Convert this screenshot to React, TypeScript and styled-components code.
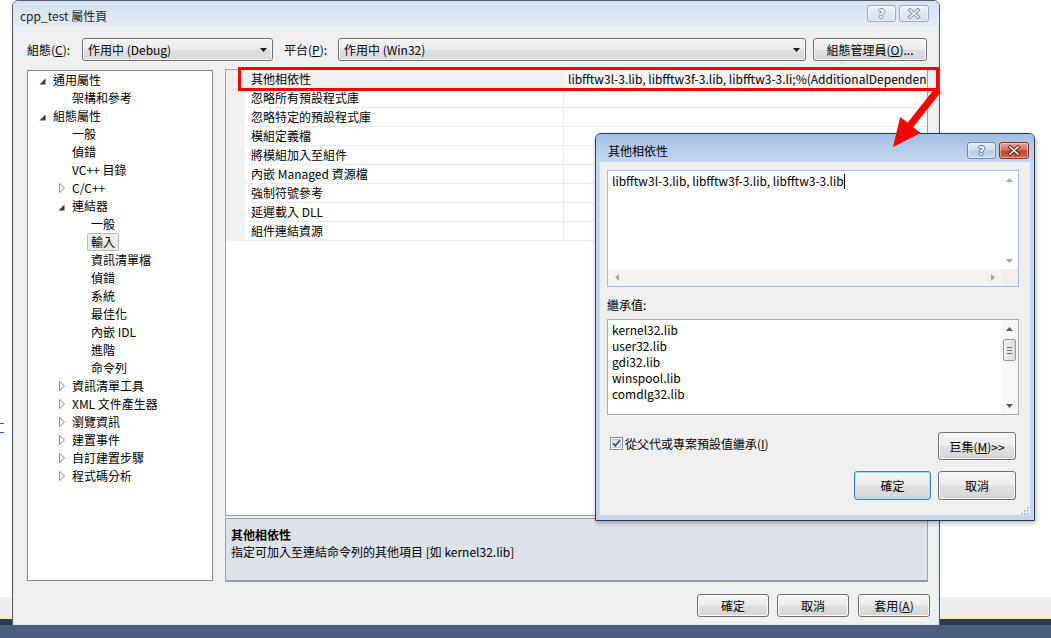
import React from "react";
import styled, { createGlobalStyle } from "styled-components";

const FONT = `"Noto Sans CJK TC", "Noto Sans", sans-serif`;

const GlobalStyle = createGlobalStyle`
  html, body { margin: 0; padding: 0; background: #fff; }
  body { font-family: ${FONT}; font-size: 12px; color: #000; }
  * { box-sizing: border-box; }
  u { text-decoration: underline; text-underline-offset: 1px; }
`;

/* ---------- desktop ---------- */
const Desktop = styled.div`
  position: relative;
  width: 1051px;
  height: 638px;
  overflow: hidden;
  display: flex;
  flex-direction: column;
  background: #fff;
`;
const DeskArea = styled.div`
  flex: 1;
`;
const Strip = styled.div<{ $h: number; $c: string }>`
  flex: none;
  height: ${(p) => p.$h}px;
  background: ${(p) => p.$c};
`;
const EdgeDash = styled.div<{ $top: number }>`
  position: absolute;
  left: 0;
  top: ${(p) => p.$top}px;
  width: 4px;
  height: 1px;
  background: #2b4fd0;
`;

/* ---------- main window ---------- */
const Window = styled.div`
  position: absolute;
  left: 12px;
  top: 0;
  width: 928px;
  height: 626px;
  border: 1px solid #565d68;
  border-radius: 6px 6px 0 0;
  background: #f0f0f0;
  display: flex;
  flex-direction: column;
  box-shadow: inset 1px 0 0 #d9e4f2, inset -1px 0 0 #d9e4f2, inset 0 -1px 0 #d9e4f2;
`;
const TitleBar = styled.div`
  flex: none;
  height: 25px;
  display: flex;
  align-items: flex-start;
  padding: 0 10px 0 7px;
  border-radius: 5px 5px 0 0;
  background: linear-gradient(to bottom, #d3e0f0 0%, #dde7f4 60%, #e2eaf5 100%);
`;
const TitleText = styled.div`
  margin-top: 6px;
  line-height: 17px;
  font-size: 12px;
  color: #222;
  flex: 1;
`;
const CaptionGroup = styled.div`
  display: flex;
  gap: 3px;
  margin-top: 4px;
`;
const CaptionBtn = styled.div<{ $w: number; $kind: "plain" | "active" | "close" }>`
  width: ${(p) => p.$w}px;
  height: 17px;
  border-radius: 3px;
  display: flex;
  align-items: center;
  justify-content: center;
  border: 1px solid ${(p) => (p.$kind === "close" ? "#7d3326" : p.$kind === "active" ? "#6f87a8" : "#98a9c0")};
  background: ${(p) =>
    p.$kind === "close"
      ? "linear-gradient(to bottom, #e9a99c 0%, #d4705c 45%, #c2412a 55%, #d76a52 100%)"
      : p.$kind === "active"
      ? "linear-gradient(to bottom, #e6eef8 0%, #cddcef 45%, #b7cbe6 55%, #c9d9ee 100%)"
      : "linear-gradient(to bottom, #eef3f9 0%, #dfe7f2 50%, #d5e0ee 100%)"};
  box-shadow: inset 0 0 0 1px rgba(255, 255, 255, 0.45);
`;
const HelpGlyph = styled.span<{ $c: string }>`
  font-family: "DejaVu Sans", sans-serif;
  font-weight: bold;
  font-size: 12px;
  line-height: 12px;
  color: #f7f9fc;
  text-shadow: 1px 0 ${(p) => p.$c}, -1px 0 ${(p) => p.$c}, 0 1px ${(p) => p.$c}, 0 -1px ${(p) => p.$c};
`;

const CloseGlyph = ({ outer, inner }: { outer: string; inner: string }) => (
  <svg width="14" height="11" viewBox="0 0 14 11">
    <g strokeLinecap="square">
      <line x1="3" y1="2" x2="11" y2="9" stroke={outer} strokeWidth="3.6" />
      <line x1="11" y1="2" x2="3" y2="9" stroke={outer} strokeWidth="3.6" />
      <line x1="3" y1="2" x2="11" y2="9" stroke={inner} strokeWidth="1.6" />
      <line x1="11" y1="2" x2="3" y2="9" stroke={inner} strokeWidth="1.6" />
    </g>
  </svg>
);

const Body = styled.div`
  flex: 1;
  display: flex;
  flex-direction: column;
  padding: 12px 11px 8px 14px;
`;

const ConfigRow = styled.div`
  display: flex;
  align-items: center;
  height: 23px;
`;
const FieldLabel = styled.div<{ $w: number; $pl?: number }>`
  width: ${(p) => p.$w}px;
  padding-left: ${(p) => p.$pl ?? 0}px;
  flex: none;
  line-height: 17px;
  white-space: nowrap;
`;
const Combo = styled.div<{ $w: number }>`
  width: ${(p) => p.$w}px;
  height: 23px;
  flex: none;
  display: flex;
  align-items: center;
  justify-content: space-between;
  padding: 0 5px 0 5px;
  border: 1px solid #707070;
  border-radius: 3px;
  background: linear-gradient(to bottom, #f4f4f4 0%, #ececec 48%, #e0e0e0 52%, #d9d9d9 100%);
  box-shadow: inset 0 0 0 1px #fafafa;
  line-height: 17px;
`;
const DropArrow = () => (
  <svg width="7" height="4" viewBox="0 0 7 4">
    <polygon points="0,0 7,0 3.5,4" fill="#1a1a1a" />
  </svg>
);

const Btn = styled.button<{ $w: number; $h: number; $focus?: boolean; $ml?: number }>`
  width: ${(p) => p.$w}px;
  height: ${(p) => p.$h}px;
  margin-left: ${(p) => p.$ml ?? 0}px;
  flex: none;
  padding: 0;
  display: flex;
  align-items: center;
  justify-content: center;
  font-family: ${FONT};
  font-size: 12px;
  line-height: 17px;
  color: #000;
  border: 1px solid ${(p) => (p.$focus ? "#3c7fb1" : "#707070")};
  border-radius: 3px;
  background: linear-gradient(to bottom, #f5f5f5 0%, #ededed 48%, #e0e0e0 52%, #d5d5d5 100%);
  box-shadow: inset 0 0 0 1px ${(p) => (p.$focus ? "#a9dcf6" : "#fbfbfb")};
  white-space: nowrap;
`;

const ContentRow = styled.div`
  display: flex;
  gap: 12px;
  margin-top: 8px;
  height: 513px;
`;

/* ---------- tree ---------- */
const Tree = styled.div`
  width: 186px;
  height: 511px;
  margin-top: 1px;
  flex: none;
  border: 1px solid #828790;
  background: #fff;
`;
const TreeRow = styled.div<{ $level: number }>`
  height: 18px;
  display: flex;
  align-items: center;
  padding-left: ${(p) => 6 + p.$level * 19}px;
`;
const Toggle = styled.div`
  width: 19px;
  height: 18px;
  flex: none;
  display: flex;
  align-items: center;
  padding-left: 5px;
`;
const TreeLabel = styled.div<{ $sel?: boolean }>`
  margin-left: -4px;
  padding: 0 3px;
  height: 18px;
  line-height: 16px;
  white-space: nowrap;
  border: 1px solid ${(p) => (p.$sel ? "#b9b9b9" : "transparent")};
  border-radius: 2px;
  background: ${(p) => (p.$sel ? "#ebebeb" : "transparent")};
`;
const OpenTri = () => (
  <svg width="7" height="7" viewBox="0 0 7 7" style={{ marginTop: 2 }}>
    <polygon points="6.5,0.5 6.5,6.5 0.5,6.5" fill="#3b3b3b" />
  </svg>
);
const ClosedTri = () => (
  <svg width="7" height="10" viewBox="0 0 7 10" style={{ marginLeft: 1 }}>
    <polygon points="0.5,0.5 5.5,5 0.5,9.5" fill="#fff" stroke="#8c8c8c" strokeWidth="1" />
  </svg>
);

/* ---------- property grid ---------- */
const RightCol = styled.div`
  flex: 1;
  display: flex;
  flex-direction: column;
  gap: 2px;
`;
const Grid = styled.div`
  height: 447px;
  border: 1px solid #a0a0a0;
  background: #fff;
  overflow: hidden;
`;
const PropRow = styled.div`
  display: grid;
  grid-template-columns: 19px 319px 1fr;
  height: 19px;
`;
const Gutter = styled.div`
  background: #f0f0f0;
`;
const NameCell = styled.div<{ $active?: boolean }>`
  padding-left: 6px;
  line-height: 18px;
  border-bottom: 1px solid #ececec;
  border-right: 1px solid #ececec;
  background: ${(p) => (p.$active ? "#f0f0f0" : "#fff")};
  white-space: nowrap;
  overflow: hidden;
`;
const ValueCell = styled.div<{ $active?: boolean }>`
  padding-left: 4px;
  line-height: 18px;
  border-bottom: 1px solid #ececec;
  background: ${(p) => (p.$active ? "#f4f4f4" : "#fff")};
  white-space: nowrap;
  overflow: hidden;
`;
const Description = styled.div`
  height: 64px;
  border: 1px solid #a0a0a0;
  border-bottom: 2px solid #9c9c9c;
  background: #dde1e8;
  padding: 7px 5px;
`;
const DescLine = styled.div<{ $bold?: boolean }>`
  line-height: 17px;
  font-weight: ${(p) => (p.$bold ? "bold" : "normal")};
  white-space: nowrap;
`;
const ButtonRow = styled.div`
  display: flex;
  justify-content: flex-end;
  gap: 8px;
  margin-top: 12px;
  margin-right: -2px;
  height: 23px;
`;

/* ---------- dialog ---------- */
const Dialog = styled.div`
  position: absolute;
  left: 595px;
  top: 133px;
  width: 440px;
  height: 388px;
  border: 1px solid #2f3946;
  border-radius: 6px 6px 0 0;
  background: #c2d6ef;
  display: flex;
  flex-direction: column;
  box-shadow: 1px 2px 5px rgba(0, 0, 0, 0.3);
`;
const DlgTitleBar = styled.div`
  flex: none;
  height: 28px;
  display: flex;
  align-items: flex-start;
  padding: 0 5px 0 12px;
  border-radius: 5px 5px 0 0;
  background: linear-gradient(to bottom, #a0bde3 0%, #b3cbea 45%, #c2d6ef 100%);
`;
const DlgTitle = styled.div`
  flex: 1;
  margin-top: 8px;
  line-height: 17px;
`;
const DlgCaptions = styled(CaptionGroup)`
  margin-top: 8px;
`;
const DlgInterior = styled.div`
  position: relative;
  flex: 1;
  margin: 0 4px 5px 4px;
  background: #f0f0f0;
  display: flex;
  flex-direction: column;
  padding: 8px 11px 0 7px;
`;
const EditBox = styled.div`
  height: 117px;
  border: 1px solid #a7bcd8;
  background: #fff;
  display: grid;
  grid-template-columns: 1fr 17px;
  grid-template-rows: 1fr 17px;
`;
const EditText = styled.div`
  padding: 2px 4px;
  line-height: 16px;
  white-space: nowrap;
`;
const Caret = styled.span`
  display: inline-block;
  width: 1px;
  height: 15px;
  background: #000;
  vertical-align: -3px;
`;
const VScroll = styled.div<{ $bg: string }>`
  display: flex;
  flex-direction: column;
  align-items: center;
  background: ${(p) => p.$bg};
`;
const HScroll = styled.div`
  display: flex;
  align-items: center;
  justify-content: space-between;
  background: #f3f3f3;
`;
const Corner = styled.div`
  background: #f0f0f0;
`;
const ArrowBox = styled.div`
  width: 17px;
  height: 17px;
  flex: none;
  display: flex;
  align-items: center;
  justify-content: center;
`;
const Spacer = styled.div`
  flex: 1;
`;
const ScrollArrow = ({ dir, color }: { dir: "up" | "down" | "left" | "right"; color: string }) => {
  const pts =
    dir === "up"
      ? "0,4 7,4 3.5,0"
      : dir === "down"
      ? "0,0 7,0 3.5,4"
      : dir === "left"
      ? "4,0 4,7 0,3.5"
      : "0,0 0,7 4,3.5";
  const horiz = dir === "left" || dir === "right";
  return (
    <svg width={horiz ? 4 : 7} height={horiz ? 7 : 4} viewBox={horiz ? "0 0 4 7" : "0 0 7 4"}>
      <polygon points={pts} fill={color} />
    </svg>
  );
};

const FieldCaption = styled.div`
  margin-top: 9px;
  height: 18px;
  line-height: 18px;
`;
const ListBox = styled.div`
  margin-top: 5px;
  height: 96px;
  border: 1px solid #abadb3;
  background: #fff;
  display: grid;
  grid-template-columns: 1fr 17px;
`;
const ListItems = styled.div`
  padding: 2px 4px;
`;
const ListItem = styled.div`
  line-height: 16px;
`;
const Thumb = styled.div`
  width: 13px;
  height: 22px;
  margin-top: 2px;
  border: 1px solid #979797;
  border-radius: 2px;
  background: linear-gradient(to right, #f4f4f4, #e4e4e4 60%, #d9d9d9);
  display: flex;
  flex-direction: column;
  align-items: center;
  justify-content: center;
  gap: 2px;
`;
const GripLine = styled.div`
  width: 5px;
  height: 1px;
  background: #6d6d6d;
`;
const CheckRow = styled.div`
  margin-top: 17px;
  margin-right: 3px;
  height: 28px;
  display: flex;
  justify-content: space-between;
  align-items: flex-start;
`;
const CheckGroup = styled.div`
  display: flex;
  align-items: center;
  gap: 2px;
  margin-top: 3px;
  margin-left: 3px;
`;
const CheckLabel = styled.span`
  line-height: 17px;
`;
const CheckBox = () => (
  <svg width="13" height="13" viewBox="0 0 13 13">
    <defs>
      <linearGradient id="cbg" x1="0" y1="0" x2="1" y2="1">
        <stop offset="0" stopColor="#dcdcdc" />
        <stop offset="1" stopColor="#fbfbfb" />
      </linearGradient>
    </defs>
    <rect x="0.5" y="0.5" width="12" height="12" fill="#fff" stroke="#8e8f8f" />
    <rect x="2.5" y="2.5" width="8" height="8" fill="url(#cbg)" stroke="#c9c9c9" />
    <path d="M3.3 6.4 L5.4 8.8 L9.8 3.2" fill="none" stroke="#3c4f92" strokeWidth="1.8" />
  </svg>
);
const OkRow = styled.div`
  margin-top: 11px;
  margin-right: 3px;
  display: flex;
  justify-content: flex-end;
  gap: 7px;
`;
const ResizeGrip = styled.div`
  position: absolute;
  right: 1px;
  bottom: 1px;
  width: 11px;
  height: 11px;
`;

/* ---------- annotation overlays ---------- */
const RedBox = styled.div`
  position: absolute;
  left: 238px;
  top: 67px;
  width: 701px;
  height: 24px;
  border: 3px solid #ff0000;
`;
const ArrowSvg = styled.svg`
  position: absolute;
  left: 885px;
  top: 84px;
`;

type TreeNode = { label: string; level: number; toggle?: "open" | "closed"; selected?: boolean };
const treeItems: TreeNode[] = [
  { label: "通用屬性", level: 0, toggle: "open" },
  { label: "架構和參考", level: 1 },
  { label: "組態屬性", level: 0, toggle: "open" },
  { label: "一般", level: 1 },
  { label: "偵錯", level: 1 },
  { label: "VC++ 目錄", level: 1 },
  { label: "C/C++", level: 1, toggle: "closed" },
  { label: "連結器", level: 1, toggle: "open" },
  { label: "一般", level: 2 },
  { label: "輸入", level: 2, selected: true },
  { label: "資訊清單檔", level: 2 },
  { label: "偵錯", level: 2 },
  { label: "系統", level: 2 },
  { label: "最佳化", level: 2 },
  { label: "內嵌 IDL", level: 2 },
  { label: "進階", level: 2 },
  { label: "命令列", level: 2 },
  { label: "資訊清單工具", level: 1, toggle: "closed" },
  { label: "XML 文件產生器", level: 1, toggle: "closed" },
  { label: "瀏覽資訊", level: 1, toggle: "closed" },
  { label: "建置事件", level: 1, toggle: "closed" },
  { label: "自訂建置步驟", level: 1, toggle: "closed" },
  { label: "程式碼分析", level: 1, toggle: "closed" },
];

const props: { name: string; value?: string }[] = [
  { name: "其他相依性", value: "libfftw3l-3.lib, libfftw3f-3.lib, libfftw3-3.li;%(AdditionalDependencies)" },
  { name: "忽略所有預設程式庫" },
  { name: "忽略特定的預設程式庫" },
  { name: "模組定義檔" },
  { name: "將模組加入至組件" },
  { name: "內嵌 Managed 資源檔" },
  { name: "強制符號參考" },
  { name: "延遲載入 DLL" },
  { name: "組件連結資源" },
];

const inherited = ["kernel32.lib", "user32.lib", "gdi32.lib", "winspool.lib", "comdlg32.lib"];

export default function App() {
  return (
    <>
      <GlobalStyle />
      <Desktop>
        <DeskArea />
        <Strip $h={18} $c="#efefef" />
        <Strip $h={4} $c="#f8ecc6" />
        <Strip $h={6} $c="#2b3a55" />
        <Strip $h={13} $c="#4d5f80" />
        <EdgeDash $top={423} />
        <EdgeDash $top={432} />

        <Window>
          <TitleBar>
            <TitleText>cpp_test 屬性頁</TitleText>
            <CaptionGroup>
              <CaptionBtn $w={29} $kind="plain">
                <HelpGlyph $c="#8294ad">?</HelpGlyph>
              </CaptionBtn>
              <CaptionBtn $w={30} $kind="plain">
                <CloseGlyph outer="#8294ad" inner="#f5f8fc" />
              </CaptionBtn>
            </CaptionGroup>
          </TitleBar>
          <Body>
            <ConfigRow>
              <FieldLabel $w={55}>
                組態(<u>C</u>):
              </FieldLabel>
              <Combo $w={191}>
                <span>作用中 (Debug)</span>
                <DropArrow />
              </Combo>
              <FieldLabel $w={65} $pl={11}>
                平台(<u>P</u>):
              </FieldLabel>
              <Combo $w={468}>
                <span>作用中 (Win32)</span>
                <DropArrow />
              </Combo>
              <Btn $w={114} $h={23} $ml={7}>
                組態管理員(<u>O</u>)...
              </Btn>
            </ConfigRow>

            <ContentRow>
              <Tree>
                {treeItems.map((t, i) => (
                  <TreeRow key={i} $level={t.level}>
                    <Toggle>
                      {t.toggle === "open" && <OpenTri />}
                      {t.toggle === "closed" && <ClosedTri />}
                    </Toggle>
                    <TreeLabel $sel={t.selected}>{t.label}</TreeLabel>
                  </TreeRow>
                ))}
              </Tree>
              <RightCol>
                <Grid>
                  {props.map((p, i) => (
                    <PropRow key={i}>
                      <Gutter />
                      <NameCell $active={i === 0}>{p.name}</NameCell>
                      <ValueCell $active={i === 0}>{p.value ?? ""}</ValueCell>
                    </PropRow>
                  ))}
                </Grid>
                <Description>
                  <DescLine $bold>其他相依性</DescLine>
                  <DescLine>指定可加入至連結命令列的其他項目 [如 kernel32.lib]</DescLine>
                </Description>
              </RightCol>
            </ContentRow>

            <ButtonRow>
              <Btn $w={72} $h={23}>確定</Btn>
              <Btn $w={72} $h={23}>取消</Btn>
              <Btn $w={72} $h={23} $ml={1}>
                套用(<u>A</u>)
              </Btn>
            </ButtonRow>
          </Body>
        </Window>

        <Dialog>
          <DlgTitleBar>
            <DlgTitle>其他相依性</DlgTitle>
            <DlgCaptions>
              <CaptionBtn $w={29} $kind="active">
                <HelpGlyph $c="#5d7394">?</HelpGlyph>
              </CaptionBtn>
              <CaptionBtn $w={30} $kind="close">
                <CloseGlyph outer="#6b2519" inner="#ffffff" />
              </CaptionBtn>
            </DlgCaptions>
          </DlgTitleBar>
          <DlgInterior>
            <EditBox>
              <EditText>
                libfftw3l-3.lib, libfftw3f-3.lib, libfftw3-3.lib
                <Caret />
              </EditText>
              <VScroll $bg="#fff">
                <ArrowBox>
                  <ScrollArrow dir="up" color="#a8a8a8" />
                </ArrowBox>
                <Spacer />
                <ArrowBox>
                  <ScrollArrow dir="down" color="#a8a8a8" />
                </ArrowBox>
              </VScroll>
              <HScroll>
                <ArrowBox>
                  <ScrollArrow dir="left" color="#a8a8a8" />
                </ArrowBox>
                <ArrowBox>
                  <ScrollArrow dir="right" color="#a8a8a8" />
                </ArrowBox>
              </HScroll>
              <Corner />
            </EditBox>

            <FieldCaption>繼承值:</FieldCaption>
            <ListBox>
              <ListItems>
                {inherited.map((l) => (
                  <ListItem key={l}>{l}</ListItem>
                ))}
              </ListItems>
              <VScroll $bg="#f7f7f7">
                <ArrowBox>
                  <ScrollArrow dir="up" color="#5a5a5a" />
                </ArrowBox>
                <Thumb>
                  <GripLine />
                  <GripLine />
                  <GripLine />
                </Thumb>
                <Spacer />
                <ArrowBox>
                  <ScrollArrow dir="down" color="#5a5a5a" />
                </ArrowBox>
              </VScroll>
            </ListBox>

            <CheckRow>
              <CheckGroup>
                <CheckBox />
                <CheckLabel>
                  從父代或專案預設值繼承(<u>I</u>)
                </CheckLabel>
              </CheckGroup>
              <Btn $w={78} $h={28}>
                巨集(<u>M</u>)&gt;&gt;
              </Btn>
            </CheckRow>

            <OkRow>
              <Btn $w={77} $h={29} $focus>
                確定
              </Btn>
              <Btn $w={78} $h={29}>取消</Btn>
            </OkRow>

            <ResizeGrip>
              <svg width="11" height="11" viewBox="0 0 11 11">
                {[
                  [9, 1],
                  [9, 4],
                  [6, 4],
                  [9, 7],
                  [6, 7],
                  [3, 7],
                ].map(([x, y], i) => (
                  <rect key={i} x={x} y={y} width="1.5" height="1.5" fill="#9aa0a8" />
                ))}
              </svg>
            </ResizeGrip>
          </DlgInterior>
        </Dialog>

        <RedBox />
        <ArrowSvg width="60" height="66" viewBox="0 0 60 66">
          <polygon
            points="50.25,3.83 55.75,8.17 28.15,43.17 35.6,49.1 8,63 15.2,32.9 22.65,38.83"
            fill="#ff0000"
          />
        </ArrowSvg>
      </Desktop>
    </>
  );
}
